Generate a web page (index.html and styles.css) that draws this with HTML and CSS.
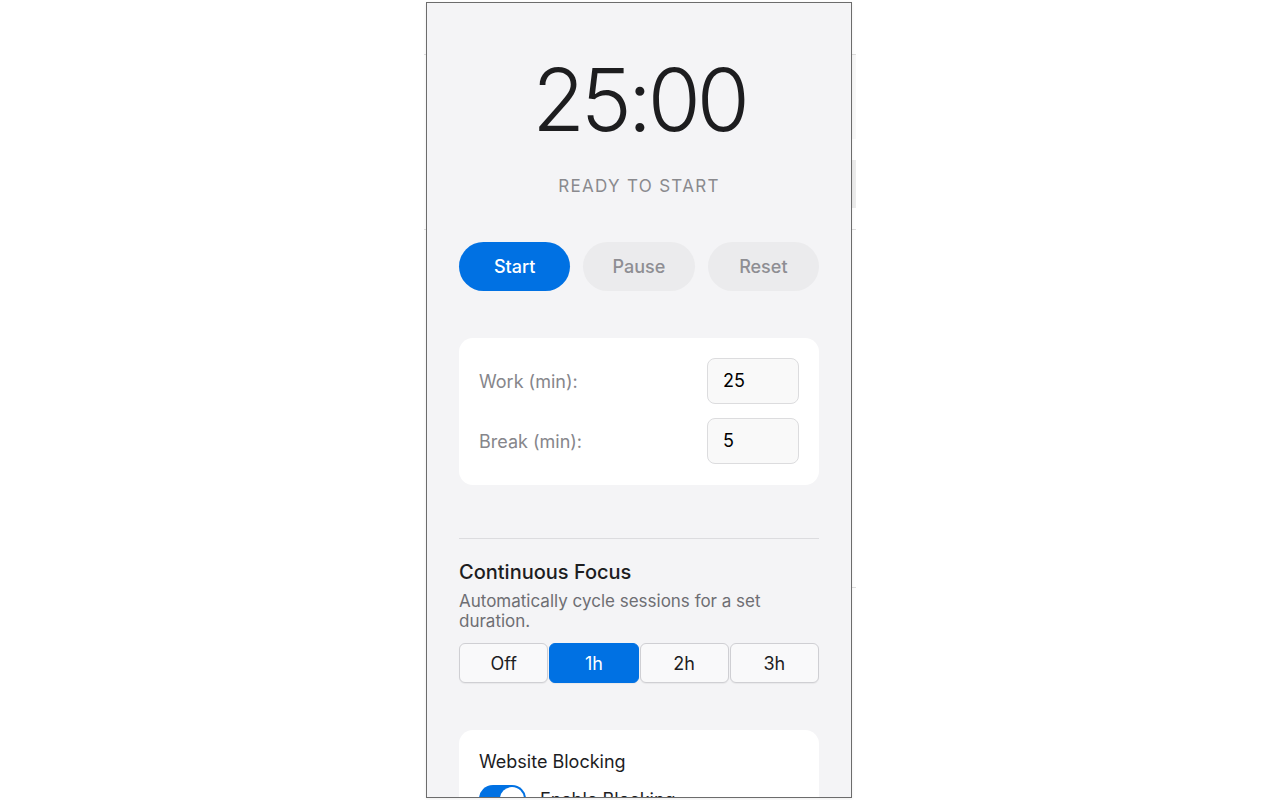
FILE: index.html
```html
<!DOCTYPE html>
<html lang="en">
<head>
<meta charset="utf-8">
<title>Focus Timer</title>
<link rel="stylesheet" href="styles.css">
</head>
<body>
<div class="stage">
  <div class="backdrop">
    <div class="bd-top"></div>
    <div class="bd-line"></div>
    <div class="bd-shade"></div>
    <div class="bd-space1"></div>
    <div class="bd-box"></div>
    <div class="bd-space2"></div>
    <div class="bd-line"></div>
    <div class="bd-space3"></div>
    <div class="bd-line bd-line-right"></div>
  </div>

  <div class="popup">
    <div class="content">
      <div class="timer">25:00</div>
      <div class="status">Ready to start</div>

      <div class="controls">
        <button class="btn btn-primary">Start</button>
        <button class="btn btn-muted">Pause</button>
        <button class="btn btn-muted">Reset</button>
      </div>

      <div class="card settings">
        <div class="row">
          <span class="label">Work (min):</span>
          <div class="num-input">25</div>
        </div>
        <div class="row">
          <span class="label">Break (min):</span>
          <div class="num-input">5</div>
        </div>
      </div>

      <div class="divider"></div>

      <div class="heading">Continuous Focus</div>
      <div class="desc">Automatically cycle sessions for a set duration.</div>

      <div class="segmented">
        <button class="seg">Off</button>
        <button class="seg seg-active">1h</button>
        <button class="seg">2h</button>
        <button class="seg">3h</button>
      </div>

      <div class="card blocking">
        <div class="block-title">Website Blocking</div>
        <div class="toggle-row">
          <span class="toggle"><span class="knob"></span></span>
          <span class="toggle-label">Enable Blocking</span>
        </div>
      </div>
    </div>
  </div>
</div>
</body>
</html>
```

FILE: styles.css
```css
* { box-sizing: border-box; }

html, body {
  margin: 0;
  padding: 0;
  background: #ffffff;
  font-family: Inter, "Noto Sans", "Liberation Sans", sans-serif;
}

.stage {
  position: relative;
  width: 1280px;
  height: 800px;
  overflow: hidden;
}

/* page behind the popup */
.backdrop {
  margin-left: 424px;
  width: 432px;
}
.bd-top { height: 54px; }
.bd-line { height: 1px; background: #dedede; }
.bd-line-right { margin-left: 427px; }
.bd-shade { height: 84px; margin-left: 427px; background: #f8f8f8; }
.bd-space1 { height: 21px; }
.bd-box {
  height: 48px;
  margin-left: 427px;
  background: #ececec;
}
.bd-space2 { height: 21px; }
.bd-space3 { height: 357px; }

/* popup window */
.popup {
  position: absolute;
  left: 426px;
  top: 2px;
  width: 426px;
  height: 796px;
  border: 1px solid #6c6c6c;
  background: #f4f4f6;
  overflow: hidden;
  box-shadow: 0 1px 3px rgba(0,0,0,0.08);
}

.content {
  padding: 0 32px;
}

.timer {
  margin-top: 54px;
  font-size: 86px;
  line-height: 86px;
  font-weight: 300;
  letter-spacing: -0.048em;
  text-align: center;
  color: #1d1d1f;
}

.status {
  margin-top: 33px;
  font-size: 17px;
  line-height: 20px;
  letter-spacing: 1.3px;
  text-transform: uppercase;
  text-align: center;
  color: #8a8a8e;
}

.controls {
  margin-top: 46px;
  display: grid;
  grid-template-columns: repeat(3, 1fr);
  gap: 13px;
}

.btn {
  height: 49px;
  border: none;
  border-radius: 25px;
  font-family: inherit;
  font-size: 18px;
  font-weight: 500;
  padding: 0;
}
.btn-primary {
  background: #0071e3;
  color: #ffffff;
}
.btn-muted {
  background: #ebebed;
  color: #8e8e93;
}

.card {
  background: #ffffff;
  border-radius: 14px;
}

.settings {
  margin-top: 47px;
  padding: 20px 20px 21px;
  display: flex;
  flex-direction: column;
  gap: 14px;
}

.row {
  display: flex;
  align-items: center;
  justify-content: space-between;
}

.label {
  font-size: 18px;
  color: #86868b;
}

.num-input {
  width: 92px;
  height: 46px;
  border: 1px solid #dcdcde;
  border-radius: 8px;
  background: #f9f9f9;
  padding-left: 15px;
  font-size: 18px;
  line-height: 44px;
  color: #000;
}

.divider {
  margin-top: 53px;
  height: 1px;
  background: #dcdcdf;
}

.heading {
  margin-top: 21px;
  font-size: 20px;
  line-height: 24px;
  font-weight: 500;
  color: #1d1d1f;
}

.desc {
  margin-top: 7px;
  font-size: 17px;
  line-height: 20px;
  color: #6e6e73;
}

.segmented {
  margin-top: 12px;
  display: grid;
  grid-template-columns: repeat(4, 1fr);
  gap: 1px;
}

.seg {
  height: 40px;
  border: 1px solid #cfcfd3;
  border-radius: 6px;
  background: #f9f9fa;
  font-family: inherit;
  font-size: 18px;
  color: #1d1d1f;
  padding: 0;
  box-shadow: 0 1px 1px rgba(0,0,0,0.05);
}
.seg-active {
  background: #0071e3;
  border-color: #0071e3;
  color: #ffffff;
}

.blocking {
  margin-top: 47px;
  padding: 21px 20px 20px;
}

.block-title {
  font-size: 18px;
  line-height: 22px;
  color: #1d1d1f;
}

.toggle-row {
  margin-top: 12px;
  display: flex;
  align-items: center;
  gap: 14px;
}

.toggle {
  display: flex;
  align-items: center;
  justify-content: flex-end;
  width: 47px;
  height: 28px;
  border-radius: 14px;
  background: #0071e3;
  padding: 2px;
}
.knob {
  width: 24px;
  height: 24px;
  border-radius: 50%;
  background: #ffffff;
}

.toggle-label {
  font-size: 18px;
  color: #1d1d1f;
}
```
